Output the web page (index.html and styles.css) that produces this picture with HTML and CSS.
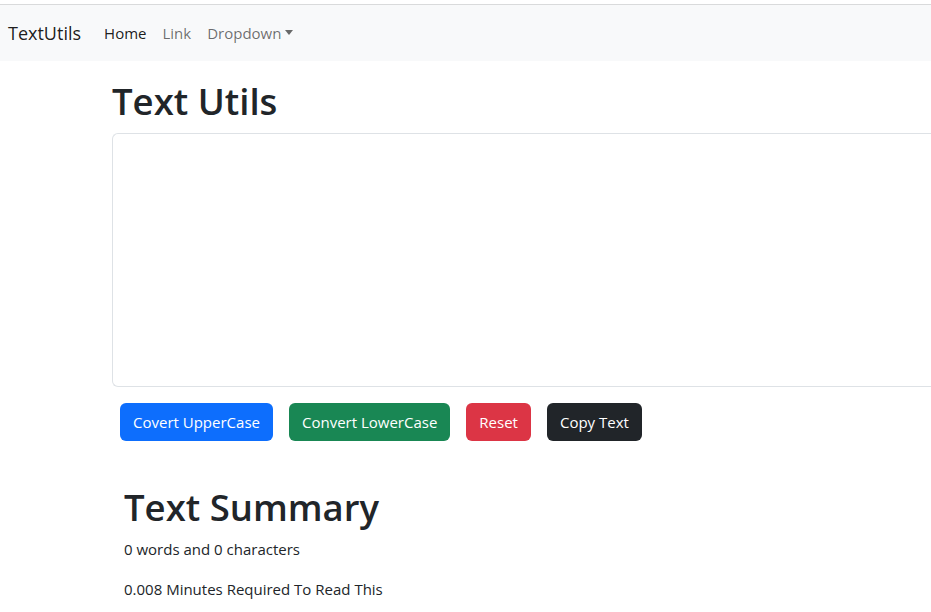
FILE: index.html
```html
<!DOCTYPE html>
<html lang="en">
<head>
<meta charset="utf-8">
<title>TextUtils</title>
<link rel="stylesheet" href="styles.css">
</head>
<body>
<div class="topline"></div>
<nav class="navbar">
  <a class="brand" href="#">TextUtils</a>
  <ul class="nav">
    <li><a class="nav-link active" href="#">Home</a></li>
    <li><a class="nav-link" href="#">Link</a></li>
    <li><a class="nav-link dropdown" href="#">Dropdown</a></li>
  </ul>
</nav>
<main class="container">
  <h1 class="title">Text Utils</h1>
  <div class="field">
    <textarea class="textarea"></textarea>
  </div>
  <div class="buttons">
    <button class="btn btn-blue">Covert UpperCase</button>
    <button class="btn btn-green">Convert LowerCase</button>
    <button class="btn btn-red">Reset</button>
    <button class="btn btn-dark">Copy Text</button>
  </div>
  <section class="summary">
    <h1 class="title summary-title">Text Summary</h1>
    <p>0 words and 0 characters</p>
    <p>0.008 Minutes Required To Read This</p>
  </section>
</main>
</body>
</html>
```

FILE: styles.css
```css
* { box-sizing: border-box; }
html, body { margin: 0; padding: 0; }
body {
  font-family: "Open Sans", "Noto Sans", sans-serif;
  font-size: 15px;
  line-height: 24px;
  color: #212529;
  background: #fff;
}
.topline {
  height: 5px;
  border-bottom: 1px solid #d9dadb;
}
.navbar {
  height: 56px;
  background: #f8f9fa;
  display: flex;
  align-items: center;
  padding: 0 8px;
}
.brand {
  font-size: 18px;
  line-height: 30px;
  color: rgba(0,0,0,0.9);
  text-decoration: none;
  margin-right: 15px;
}
.nav {
  list-style: none;
  margin: 0;
  padding: 0;
  display: flex;
}
.nav-link {
  display: block;
  padding: 8px;
  color: rgba(0,0,0,0.58);
  text-decoration: none;
}
.nav-link.active { color: rgba(0,0,0,0.9); }
.dropdown::after {
  content: "";
  display: inline-block;
  margin-left: 4px;
  vertical-align: 4px;
  border-top: 5px solid;
  border-left: 4.5px solid transparent;
  border-right: 4.5px solid transparent;
}
.container {
  padding: 16px 0 0 112px;
}
.title {
  font-size: 36.5px;
  font-weight: 600;
  line-height: 48px;
  margin: 0 0 8px;
}
.summary-title { margin-bottom: 6px; }
.field { margin-bottom: 16px; }
.textarea {
  display: block;
  width: 100%;
  height: 254px;
  border: 1px solid #dee2e6;
  border-right: none;
  border-radius: 6px 0 0 6px;
  padding: 6px 12px;
  font: inherit;
  resize: none;
}
.buttons {
  display: flex;
  gap: 16px;
  padding-left: 8px;
}
.btn {
  font: inherit;
  line-height: 24px;
  padding: 6px 12px;
  border: 1px solid transparent;
  border-radius: 6px;
  color: #fff;
}
.btn-blue { background: #0d6efd; }
.btn-green { background: #198754; }
.btn-red { background: #dc3545; }
.btn-dark { background: #212529; }
.summary {
  padding: 42px 0 0 12px;
}
.summary p { margin: 0 0 16px; }
```
